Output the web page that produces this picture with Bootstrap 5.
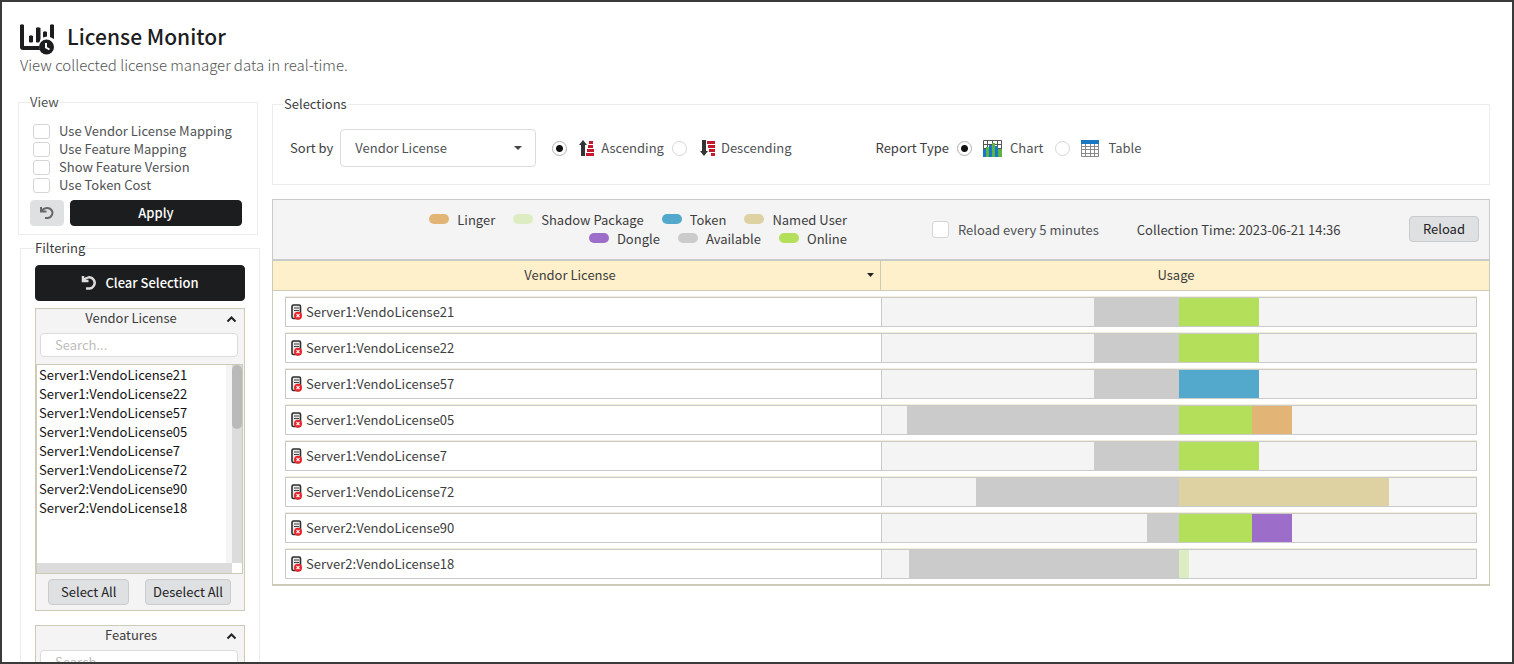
<!DOCTYPE html>
<html lang="en">
<head>
<meta charset="utf-8">
<meta name="viewport" content="width=device-width, initial-scale=1">
<title>License Monitor</title>
<link href="https://cdn.jsdelivr.net/npm/bootstrap@5.3.0/dist/css/bootstrap.min.css" rel="stylesheet">
<style>
:root{--line:#cccbb8;--gray:#c9cbca;--soft:#ececec;--panel:#f4f4f4;--ink:#1c1d1e}
body{font:13px/20px "Noto Sans CJK SC","Noto Sans CJK JP",sans-serif;color:#3d3d3d;background:#fff}
.app{height:100vh;border:2px solid #3a3a3a;overflow:hidden;padding:18px 22px 0 16px}
.masthead{padding-left:2px}
.brand{height:34px;gap:10px}
.brand svg{margin-top:3px}
.page-title{font-size:21px;line-height:32px;font-weight:500;color:var(--ink)}
.subtitle{font-size:15px;line-height:22px;font-weight:300;color:#555}
.columns{margin-top:18px}
.side{width:242px;flex:none}
.side-view{width:240px;padding:0 15px 8px 11px}
.side-filter{width:240px;margin:3px 0 0 2px;padding:0 14px}
fieldset.group{border:1px solid var(--soft)}
.group legend{float:none;width:auto;font-size:13px;line-height:20px;margin:0;padding:0}
.selections legend{margin-left:10px;padding:0 1px}
.view-text,.side-view legend{color:#505254}
.side-view legend{line-height:16px}
.view-text{padding:12px 3px 6px}
.tick{appearance:none;border:1px solid #d3d5d6;border-radius:3px;background:#fff;width:17px;height:15px;margin:0;flex:none}
.tick-lg{height:17px}
.tick:checked{background:var(--ink)}
.view-row{height:18px;gap:9px;line-height:18px}
.view-actions{gap:6px}
.btn{font-size:13px;line-height:20px;border-radius:4px;padding:2px 8px}
.btn-ink{--bs-btn-color:#fff;--bs-btn-bg:#1c1d1e;--bs-btn-border-color:#1c1d1e;--bs-btn-hover-bg:#333;--bs-btn-hover-color:#fff;font-weight:500}
.btn-soft{--bs-btn-color:#222;--bs-btn-bg:#dfe0e2;--bs-btn-border-color:#c9cbcc;--bs-btn-hover-bg:#d2d3d5}
.btn-reset{--bs-btn-border-color:#dfe0e2;line-height:0}
.btn-reload{padding:2px 13px;margin-bottom:2px}
.btn-clear{height:36px;margin-top:7px}
.filter-box{border:1px solid var(--line);background:var(--panel);margin-top:7px}
.filter-box+.filter-box{margin-top:14px}
.filter-head{height:20px;border:0;background:none;padding:0 7px 0 0;color:#3d3d3d;line-height:18px}
.filter-head span{padding-bottom:2px}
.search{height:24px;border:1px solid #dcdcdc;border-radius:4px;padding:0 14px 2px;font-size:13px;line-height:20px;margin:4px 6px 0 4px;min-width:0}
.search::placeholder{color:#bdbdbd}
.listbox{display:grid;grid-template-columns:1fr 6px 10px;grid-template-rows:198px 10px;border:1px solid var(--line);margin:7px 1px 0 0;background:#fff}
.listbox select{border:0;outline:0;padding:0;overflow:hidden;width:100%;height:198px;background:#fff;color:#111}
.listbox option{height:19px;min-height:19px;line-height:18px;padding:0 2px}
.gutter{background:var(--panel)}
.track{background:#dcdcdc}
.track-x{grid-column:1/3}
.thumb{height:64px;border-radius:5px;background:#bababa}
.list-actions{padding:5px 13px 5px 12px}
.list-actions .btn{white-space:nowrap;padding:2px 7px}
.list-actions .btn:first-child{padding:2px 12px}
.sortby{width:196px;height:38px;border:1px solid #dcdcdc;border-radius:4px;padding:0 14px;color:#505254;font-size:13px;appearance:none;background:#fff url("data:image/svg+xml,%3Csvg xmlns='http://www.w3.org/2000/svg' viewBox='0 0 8 4'%3E%3Cpath d='M0 0h8L4 4z' fill='%23444'/%3E%3C/svg%3E") no-repeat right 13px center/8px 4px}
.pick{appearance:none;width:15px;height:15px;border:1px solid #d3d5d6;border-radius:50%;margin:0;flex:none;background:#fff}
.pick:checked{border-color:#b0b0b0;background:radial-gradient(circle,#111 0 3px,#fff 4px)}
.opt{color:#505254}
.selections{height:91px}
.sel-row{padding:15px 17px 0}
.sel-row>label:first-child{margin-right:7px}
.report{white-space:nowrap;margin:0 8px 0 80px}
.toolbar{border:1px solid var(--gray);border-bottom-width:2px;background:var(--panel);min-height:62px;padding-right:10px;margin-top:14px}
.keys{width:574px;flex:none;padding-bottom:2px}
.keys-row{line-height:19px;gap:18px;white-space:nowrap}
.swatch{width:20px;height:10px;border-radius:5px;margin-right:8px;flex:none}
.auto{margin-left:85px;gap:9px}
.stamp{margin-left:38px}
.c-linger{background:#e2b576}.c-shadow{background:#deedc1}.c-token{background:#53a9cc}.c-named{background:#dfd2a2}
.c-dongle{background:#9d6dca}.c-available{background:#cbcbcb}.c-online{background:#b3df5b}
.usage{width:100%;table-layout:fixed;border-collapse:separate;border-spacing:0}
.usage-frame{border:1px solid var(--line);border-width:0 1px 2px;padding-bottom:5px}
.usage th{background:#fff0cc;height:30px;padding:0 0 2px;font-weight:400;text-align:center;border-bottom:1px solid var(--line)}
.usage th:first-child{border-right:1px solid var(--line)}
.usage th:last-child{padding-right:18px}
.sort-head{border:0;background:none;padding:0 6px 0 0;color:inherit;line-height:20px}
.usage td{padding:5px 0 0 12px}
.usage td+td{padding:5px 12px 0 0}
.cell{height:30px;border:1px solid var(--gray);border-right:0;padding-left:4px;gap:4px}
.lid{border-top:1px solid #f0eeda}
.bar{height:30px;border:1px solid var(--gray);background:var(--panel)}
</style>
</head>
<body>
<div class="app">
  <header class="masthead">
    <div class="brand d-flex">
      <svg width="37" height="32" viewBox="0 0 37 32" fill="#1c1d1e"><path d="M0 2q2-1.500 4 0v21h15a9 9 0 0 0 1 4H3a3 3 0 0 1-3-3zM9 13q2-1.500 4 0v6q-2 1-4 0zM16 5q2-1.500 4.500 0v11l-1 3q-2 1-3.500 0zM23 9q2-1.500 4 0v4.500l-4 1zM30 2q2-1.500 4 0v14l-4-2z"/><circle cx="26.500" cy="24" r="7.500"/><path d="M26 20v4.500l3.500 2" fill="none" stroke="#fff" stroke-width="2"/></svg>
      <h1 class="page-title mb-0">License Monitor</h1>
    </div>
    <p class="subtitle mb-0">View collected license manager data in real-time.</p>
  </header>

  <div class="columns d-flex gap-2">
    <aside class="side">
      <fieldset class="group side-view">
        <legend>View</legend>
        <div class="view-text">
          <label class="d-flex align-items-center view-row"><input class="tick" type="checkbox">Use Vendor License Mapping</label>
          <label class="d-flex align-items-center view-row"><input class="tick" type="checkbox">Use Feature Mapping</label>
          <label class="d-flex align-items-center view-row"><input class="tick" type="checkbox">Show Feature Version</label>
          <label class="d-flex align-items-center view-row"><input class="tick" type="checkbox">Use Token Cost</label>
        </div>
        <div class="d-flex view-actions">
          <button class="btn btn-soft btn-reset" type="button" aria-label="Reset view"><svg width="16" height="16" viewBox="0 0 16 16" fill="none" stroke="#666" stroke-width="2"><path d="M2 2v4.500h5.500M2.500 6C5 2.500 10 2 12.500 5c2.500 3.500-.5 8-4 8H6"/></svg></button>
          <button class="btn btn-ink flex-fill" type="button">Apply</button>
        </div>
      </fieldset>

      <fieldset class="group side-filter">
        <legend>Filtering</legend>
        <button class="btn btn-ink btn-clear w-100 d-flex align-items-center justify-content-center gap-2" type="button"><svg width="16" height="16" viewBox="0 0 16 16" fill="none" stroke="#ddd" stroke-width="2.500"><path d="M2 1v5h5.500M2.500 5.500C5 2 10 1 12.500 4.500c3 4-.5 9-4 9H5"/></svg>Clear Selection</button>
        <section class="filter-box">
          <button class="filter-head w-100 d-flex align-items-center" type="button"><span class="flex-fill">Vendor License</span><svg width="11" height="7" viewBox="0 0 11 7" fill="none" stroke="#222" stroke-width="2"><path d="M1.500 5.500l4-4 4 4"/></svg></button>
          <div class="d-flex"><input class="search flex-fill" type="text" placeholder="Search..." aria-label="Search vendor licenses"></div>
          <div class="listbox">
            <select multiple aria-label="Vendor licenses" id="vendors"></select>
            <div class="gutter"></div>
            <div class="track"><div class="thumb"></div></div>
            <div class="track track-x"></div>
          </div>
          <div class="list-actions d-flex justify-content-between">
            <button class="btn btn-soft" type="button">Select All</button>
            <button class="btn btn-soft" type="button">Deselect All</button>
          </div>
        </section>
        <section class="filter-box">
          <button class="filter-head w-100 d-flex align-items-center" type="button"><span class="flex-fill">Features</span><svg width="11" height="7" viewBox="0 0 11 7" fill="none" stroke="#222" stroke-width="2"><path d="M1.500 5.500l4-4 4 4"/></svg></button>
          <div class="d-flex pb-4"><input class="search flex-fill" type="text" placeholder="Search..." aria-label="Search features"></div>
        </section>
      </fieldset>
    </aside>

    <main class="flex-fill ms-1">
      <fieldset class="group selections">
        <legend>Selections</legend>
        <div class="d-flex align-items-center sel-row">
          <label for="sortby">Sort by</label>
          <select class="sortby me-3" id="sortby"><option>Vendor License</option></select>
          <label class="opt d-flex align-items-center"><input class="pick" type="radio" name="order" checked>
            <svg class="ms-2 me-1" width="22" height="16" viewBox="0 0 22 16"><path d="M8 0l4 5h-2v11H6V5H4z" fill="#333"/><path d="M14 1h4v3h-4zM13 5h5v3h-5zM12 9h7v3h-7zM11 13h8v3h-8z" fill="#c5192d"/></svg>Ascending</label>
          <label class="opt d-flex align-items-center ms-2"><input class="pick" type="radio" name="order">
            <svg class="ms-2 me-1" width="22" height="16" viewBox="-3 0 22 16"><path d="M6 16l4-5H8V0H4v11H2z" fill="#333"/><path d="M9 1h8v3H9zM10 5h7v3h-7zM11 9h6v3h-6zM13 13h4v3h-4z" fill="#c5192d"/></svg>Descending</label>
          <span class="report ps-1">Report Type</span>
          <label class="opt d-flex align-items-center"><input class="pick" type="radio" name="report" checked>
            <svg class="ms-2 me-1" width="26" height="18" viewBox="0 0 26 18"><path d="M3.500 1.500h18v15h-18zM3 5.500h19M3 9.500h19M7.500 1v15M12.500 1v15M17.500 1v15" fill="none" stroke="#555"/><path d="M3 10h3v8H3zM9 6h3v12H9zM15 7h3v11h-3z" fill="#1878c4"/><path d="M6 8h3v10H6zM12 4h3v14h-3zM18 10h4v8h-4z" fill="#5cb247"/></svg>Chart</label>
          <label class="opt d-flex align-items-center ms-2 ps-1"><input class="pick" type="radio" name="report">
            <svg class="ms-2 me-1" width="26" height="17" viewBox="0 0 26 17"><path d="M3.500 2.500h17v14h-17zM3 6.500h18M3 9.500h18M3 13.500h18M7.500 4v12M12.500 4v12M16.500 4v12" fill="#fff" stroke="#888"/><path d="M3 0h18v4H3z" fill="#1878c4"/></svg>Table</label>
        </div>
      </fieldset>

      <div class="toolbar d-flex align-items-center">
        <div class="keys">
          <div class="keys-row d-flex justify-content-end">
            <span class="d-flex align-items-center"><i class="swatch c-linger"></i>Linger</span>
            <span class="d-flex align-items-center"><i class="swatch c-shadow"></i>Shadow Package</span>
            <span class="d-flex align-items-center"><i class="swatch c-token"></i>Token</span>
            <span class="d-flex align-items-center"><i class="swatch c-named"></i>Named User</span>
          </div>
          <div class="keys-row d-flex justify-content-end">
            <span class="d-flex align-items-center"><i class="swatch c-dongle"></i>Dongle</span>
            <span class="d-flex align-items-center"><i class="swatch c-available"></i>Available</span>
            <span class="d-flex align-items-center"><i class="swatch c-online"></i>Online</span>
          </div>
        </div>
        <label class="opt d-flex align-items-center auto"><input class="tick tick-lg" type="checkbox">Reload every 5 minutes</label>
        <span class="stamp">Collection Time: 2023-06-21 14:36</span>
        <button class="btn btn-soft btn-reload ms-auto" type="button">Reload</button>
      </div>

      <div class="usage-frame">
        <table class="usage">
          <thead><tr>
            <th scope="col"><button class="sort-head w-100 d-flex align-items-center" type="button"><span class="flex-fill">Vendor License</span><svg width="7" height="4" viewBox="0 0 7 4"><path d="M0 0h7L3.500 4z" fill="#222"/></svg></button></th>
            <th scope="col">Usage</th>
          </tr></thead>
          <tbody id="rows"></tbody>
        </table>
      </div>
    </main>
  </div>
</div>
<script src="https://cdn.jsdelivr.net/npm/bootstrap@5.3.0/dist/js/bootstrap.bundle.min.js"></script>
<script>
// Each licence: free seats left of the centre line, used seats right of it, out of 594 units.
const SCALE = 594;
const data = [
  ['Server1:VendoLicense21', 85, [['online', 80]]],
  ['Server1:VendoLicense22', 85, [['online', 80]]],
  ['Server1:VendoLicense57', 85, [['token', 80]]],
  ['Server1:VendoLicense05', 272, [['online', 73], ['linger', 40]]],
  ['Server1:VendoLicense7', 85, [['online', 80]]],
  ['Server1:VendoLicense72', 203, [['named', 210]]],
  ['Server2:VendoLicense90', 32, [['online', 73], ['dongle', 40]]],
  ['Server2:VendoLicense18', 270, [['shadow', 10]]]
];
const server = '<svg width="12" height="16" viewBox="0 0 12 16"><rect x="2" y="1" width="8.500" height="13.500" rx="1.500" fill="#e8e8e8" stroke="#2d2d2d" stroke-width="1.600"/><path d="M4 4h5M4 6.500h5" stroke="#444" stroke-width="1.200"/><circle cx="8" cy="11.700" r="4" fill="#e8262c"/><path d="M6.500 10.200l3 3M9.500 10.200l-3 3" stroke="#fff" stroke-width="1.200"/></svg>';
const pct = n => (n / SCALE * 100).toFixed(3) + '%';
const seg = (kind, n) => `<div class="c-${kind}" style="width:${pct(n)}"></div>`;
document.getElementById('rows').innerHTML = data.map(([name, free, used]) =>
  `<tr><td><div class="lid"></div><div class="cell d-flex align-items-center">${server}${name}</div></td>` +
  `<td><div class="lid"></div><div class="bar d-flex"><div style="width:${pct(SCALE / 2 - free)}"></div>${seg('available', free)}${used.map(u => seg(...u)).join('')}</div></td></tr>`).join('');
document.getElementById('vendors').innerHTML = data.map(d => `<option>${d[0]}</option>`).join('');
</script>
</body>
</html>
